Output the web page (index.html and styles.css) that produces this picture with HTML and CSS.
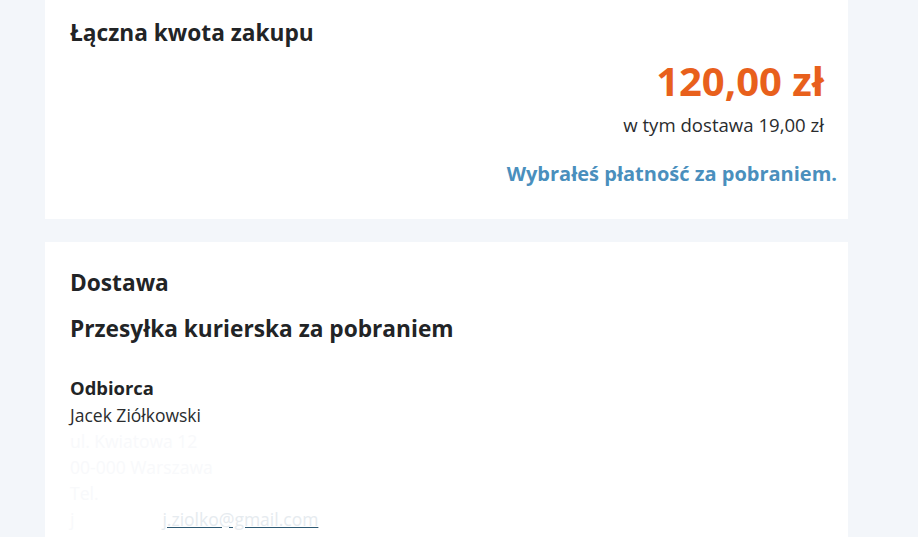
FILE: index.html
```html
<!DOCTYPE html>
<html lang="pl">
<head>
<meta charset="utf-8">
<title>Podsumowanie zamówienia</title>
<link rel="stylesheet" href="styles.css">
</head>
<body>
<main class="page">
  <section class="card card-total">
    <h2 class="card-title">Łączna kwota zakupu</h2>
    <div class="total">
      <div class="total-price">120,00 zł</div>
      <div class="total-note">w tym dostawa 19,00 zł</div>
      <div class="total-payment">Wybrałeś płatność za pobraniem.</div>
    </div>
  </section>
  <section class="card card-delivery">
    <h2 class="card-title delivery-title">Dostawa</h2>
    <h3 class="delivery-method">Przesyłka kurierska za pobraniem</h3>
    <h4 class="recipient-label">Odbiorca</h4>
    <p class="recipient-line recipient-name">Jacek Ziółkowski</p>
    <p class="recipient-line redacted"><span class="ghost">ul. Kwiatowa 12</span></p>
    <p class="recipient-line redacted"><span class="ghost">00-000 Warszawa</span></p>
    <p class="recipient-line redacted"><span class="ghost">Tel.</span></p>
    <p class="recipient-line redacted mail-line"><span class="ghost">j</span><a class="mail" href="#">j.ziolko@gmail.com</a></p>
  </section>
</main>
</body>
</html>
```
FILE: styles.css
```css
html, body {
  margin: 0;
  padding: 0;
}
body {
  background: #f3f6fa;
  font-family: "Open Sans", "Liberation Sans", sans-serif;
  color: #222426;
  overflow: hidden;
}
.page {
  width: 803px;
  margin-left: 45px;
  display: flex;
  flex-direction: column;
  gap: 23px;
}
.card {
  background: #ffffff;
  padding: 0 24px 0 25px;
}
.card-total {
  padding-top: 18px;
  padding-bottom: 32px;
}
.card-title {
  margin: 0;
  font-size: 22.7px;
  line-height: 30px;
  font-weight: 700;
}
.total {
  display: flex;
  flex-direction: column;
  align-items: flex-end;
}
.total-price {
  margin-top: 8px;
  font-size: 40px;
  line-height: 50px;
  font-weight: 700;
  color: #e8601c;
}
.total-note {
  margin-top: 7px;
  font-size: 18.6px;
  line-height: 24px;
  color: #2a2c2e;
}
.total-payment {
  margin-top: 24px;
  margin-right: -13px;
  font-size: 20px;
  line-height: 26px;
  font-weight: 700;
  color: #4a8fbd;
}
.card-delivery {
  padding-top: 26px;
  padding-bottom: 30px;
}
.delivery-method {
  margin: 16px 0 0;
  font-size: 22.7px;
  line-height: 30px;
  font-weight: 700;
}
.recipient-label {
  margin: 31px 0 0;
  font-size: 18.4px;
  line-height: 26px;
  font-weight: 700;
}
.recipient-line {
  margin: 0;
  font-size: 17.5px;
  line-height: 26px;
  color: #2a2c2e;
}
.recipient-name {
  margin-top: 1px;
}
.redacted .ghost {
  color: #f8f9fb;
}
.mail {
  margin-left: 88px;
  color: #e6ebef;
  text-decoration: underline;
  text-decoration-color: #2f5a74;
}
```
